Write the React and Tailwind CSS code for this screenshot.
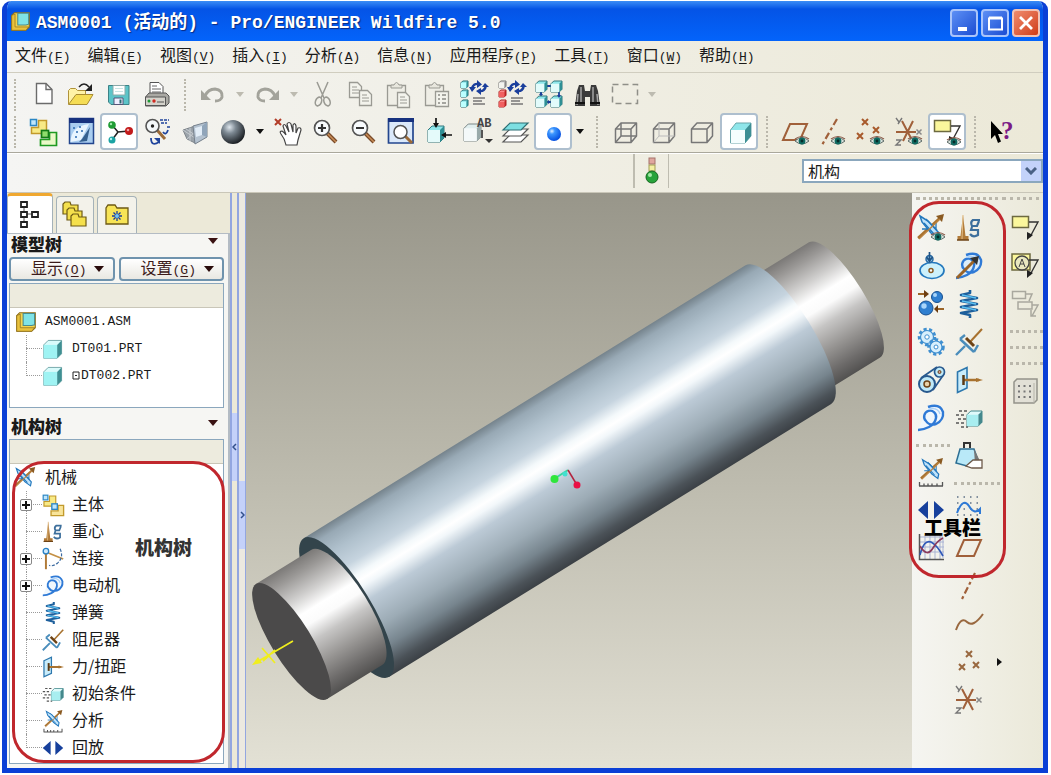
import React from "react";

/* ---------- drawing helpers ---------- */
function Svg({ size = 28, children }) {
  return (
    <svg width={size} height={size} viewBox="0 0 28 28" fill="none" className="shrink-0 overflow-visible" aria-hidden="true">
      {children}
    </svg>
  );
}

const Eye = ({ x = 20, y = 23 }) => (
  <g transform={`translate(${x} ${y})`}>
    <path d="M-7 0Q0-7 7 0Q0 6-7 0Z" fill="#d9e2dc" stroke="#5d6b68" strokeWidth="1" />
    <circle r="3.4" fill="#0f6b62" />
    <circle r="1.4" fill="#052c2a" />
    <path d="M-7-2Q0-7 7-2" stroke="#8a5a48" strokeWidth="1.2" />
  </g>
);

const Cross = ({ x, y, r = 3, c = "#a85a2c", w = 2 }) => (
  <path d={`M${x - r} ${y - r}L${x + r} ${y + r}M${x + r} ${y - r}L${x - r} ${y + r}`} stroke={c} strokeWidth={w} />
);

const Cube = ({ x = 0, y = 0, s = 8, front = "#e4fafa", side = "#2f8f94", top = "#8fe6ea", line = "#33767c" }) => (
  <g transform={`translate(${x} ${y}) scale(${s / 8})`} strokeLinejoin="round">
    <path d="M0 2L2 0H8V6L6 8H0Z" fill={top} stroke={line} strokeWidth={8 / s} />
    <path d="M6 2L8 0V6L6 8Z" fill={side} />
    <path d="M0 2H6V8H0Z" fill={front} />
  </g>
);

/* ---------- file and edit icons ---------- */
const New = () => <Svg><path d="M7.5 2.5H17l6 6v14H7.5z" fill="#fff" stroke="#6b6b6b" strokeWidth="1.4" /><path d="M17 2.5v6h6" stroke="#6b6b6b" strokeWidth="1.4" /></Svg>;
const Open = () => (
  <Svg>
    <path d="M1.5 23V9.500l2-2h5l2 2h8v4" fill="#fff3a6" stroke="#b0933a" />
    <path d="M1.500 23.500L9 13.500H26L20 23.500Z" fill="#f5dd55" stroke="#a88c32" />
    <path d="M12 6Q17 0 22 6" stroke="#222" strokeWidth="1.500" />
    <path d="M25 3v7h-7z" fill="#222" />
  </Svg>
);
const Save = () => (
  <Svg>
    <path d="M3.500 4.500H24V23.500H6L3.500 21Z" fill="#5cc4c8" stroke="#3b8286" />
    <path d="M8 4.500H20V14H8Z" fill="#fff" stroke="#8aa" />
    <path d="M9 17H18V23.500H9Z" fill="#eef" stroke="#557" />
    <path d="M14.500 18.500h2v4h-2z" fill="#2c6a70" />
    <path d="M10 7.500h8M10 10.500h8" stroke="#c9e4e4" />
  </Svg>
);
const Print = () => (
  <Svg>
    <path d="M7 13V1.500h9l4 4V13" fill="#fff" stroke="#555" />
    <path d="M9 5h5M9 8h9M9 11h9" stroke="#666" />
    <path d="M2.500 16L6 12H23l3 3v7l-3 3H2.500Z" fill="#aaa9a4" stroke="#555" />
    <path d="M2.500 16H22.500V24.500H2.500Z" fill="#d4d2cb" stroke="#555" />
    <circle cx="6" cy="20" r="1.500" fill="#1c9a34" /><circle cx="11" cy="20" r="1.700" fill="#d12a20" />
    <path d="M14 21h7" stroke="#555" />
  </Svg>
);
const Undo = () => <Svg><path d="M6 15Q9 8 16 8Q24 9 23 16Q22 20 16 20" stroke="#a3a39b" strokeWidth="3" /><path d="M2 9V19H12Z" fill="#a3a39b" /></Svg>;
const Redo = () => <Svg><g transform="translate(28 0) scale(-1 1)"><path d="M6 15Q9 8 16 8Q24 9 23 16Q22 20 16 20" stroke="#a3a39b" strokeWidth="3" /><path d="M2 9V19H12Z" fill="#a3a39b" /></g></Svg>;
const Cut = () => (
  <Svg>
    <path d="M10 1L17 17M21 1L14 17" stroke="#9a9a93" strokeWidth="1.500" />
    <ellipse cx="11.500" cy="20.500" rx="3" ry="4.500" transform="rotate(20 11.500 20.500)" stroke="#9a9a93" strokeWidth="1.600" />
    <ellipse cx="20" cy="20.500" rx="3" ry="4.500" transform="rotate(-20 20 20.500)" stroke="#9a9a93" strokeWidth="1.600" />
  </Svg>
);
const Page = ({ x, y }) => (
  <g transform={`translate(${x} ${y})`}><path d="M.5.5h8l4 4v11H.5z" fill="#f3f3ec" stroke="#9a9a93" strokeWidth="1.300" /><path d="M3 5h5M3 8h7M3 11h7" stroke="#9a9a93" /></g>
);
const Copy = () => <Svg><Page x={4} y={1} /><Page x={14} y={9} /></Svg>;
const Board = () => <><path d="M4.500 4.500H22.500V24.500H4.500Z" fill="#efeee6" stroke="#9a9a93" strokeWidth="1.300" /><path d="M8 7V4h3q2.500-5 5 0h3v3z" fill="#e8e7de" stroke="#9a9a93" /></>;
const Paste = () => <Svg><Board /><Page x={14} y={11} /></Svg>;
const PasteSpecial = () => <Svg><Board /><path d="M14.500 10.500h13v15h-13z" fill="#f3f3ec" stroke="#9a9a93" strokeWidth="1.300" /><path d="M17 14h2M17 18h2M17 22h2M21 14h4M21 18h4M21 22h4" stroke="#8c8c85" strokeWidth="1.500" /></Svg>;
const Regen = ({ red }) => (
  <Svg>
    <Cube x={2} y={0} s={7} front={red ? "#f3f3ee" : "#bff"} line={red ? "#777" : "#256b70"} side={red ? "#888" : "#2f8f94"} top={red ? "#ddd" : "#8fe6ea"} />
    <Cube x={2} y={9} s={7} front={red ? "#f06060" : "#bff"} line={red ? "#a22" : "#256b70"} side={red ? "#b22" : "#2f8f94"} top={red ? "#f99" : "#8fe6ea"} />
    <Cube x={2} y={19} s={7} front={red ? "#f06060" : "#bff"} line={red ? "#a22" : "#256b70"} side={red ? "#b22" : "#2f8f94"} top={red ? "#f99" : "#8fe6ea"} />
    <path d="M13 8Q14 2 20 3M27 4Q26 11 20 10" stroke="#1b3f9c" strokeWidth="2.400" />
    <path d="M18-1L23 3.500L18 7ZM22 7L17 10L22 14ZM10 6h7l-4 5zM23 6h7l-4-4z" fill="#1b3f9c" />
    <path d="M14 17h12M14 20h9M14 23h12" stroke="#777" strokeWidth="1.300" />
  </Svg>
);
const CubeGrid = () => (
  <Svg>
    <path d="M10 5h9M10 21h9M6 10v7M24 10v7" stroke="#1b3f9c" strokeWidth="1.800" />
    {[[1, 0], [16, 0], [1, 15], [16, 15]].map(([x, y]) => <Cube key={x + "-" + y} x={x} y={y} s={11} front="#e2fbfb" />)}
    <path d="M6 11l-2 3h4zM13 19v4l3-2zM24 17l-2-3h4z" fill="#1b3f9c" />
  </Svg>
);
const Find = () => (
  <Svg>
    <path d="M2 25L4 10L6 4H11L12 10H17L18 4H23L25 10L27 25H17V16H12V25Z" fill="#3b3b3b" />
    <path d="M5 13L4 24M8 6v17M20 6v17M24 13l1 11" stroke="#a5a5a5" strokeWidth="1.500" />
    <path d="M2 22h10M17 22h10" stroke="#111" strokeWidth="2" />
  </Svg>
);
const SelectBox = () => <Svg><rect x="1.500" y="3.500" width="25" height="19" stroke="#8f8f88" strokeWidth="1.500" strokeDasharray="6 4" /></Svg>;

/* ---------- view icons ---------- */
const Bodies = ({ size, green = true }) => (
  <Svg size={size}>
    <path d="M9.500 2.500H17.500V15.500H2.500V9.500H9.500Z" fill="#f8ea86" stroke="#c29a2c" strokeWidth="1.500" />
    <rect x="1.500" y="1.500" width="6" height="6" fill="#bfe6fb" stroke="#2b86c4" strokeWidth="1.500" />
    <path d="M20.500 14.500H27.500V27.500H11.500V21.500H20.500Z" fill={green ? "#eaf9c8" : "#f8e49a"} stroke={green ? "#1f9a22" : "#c29a2c"} strokeWidth="1.700" />
    <rect x="12.500" y="12.500" width="7" height="7" fill={green ? "#8fdc6c" : "#bfe6fb"} stroke={green ? "#147a18" : "#2b86c4"} strokeWidth="1.700" />
  </Svg>
);
const Sketcher = () => (
  <Svg>
    <path d="M2.500.500H26.500V25.500H2.500Z" fill="#a9cdf0" stroke="#23468e" strokeWidth="1.500" />
    <path d="M2 0H27V5H2Z" fill="#17327f" />
    <path d="M3.500 24Q4 8 22 6L14 22Z" fill="#e9f5ff" />
    <path d="M23 9L15 21L12 24L20 23Z" fill="#35608f" /><path d="M6 10h2M9 14h2M12 9h2M8 19h2M14 13h2" stroke="#2b6ab0" strokeWidth="1.500" />
  </Svg>
);
const Joints = () => (
  <Svg>
    <path d="M7 7L13 14L24 13M13 14L7 22" stroke="#222" strokeWidth="1.500" />
    <circle cx="7" cy="7" r="3.800" fill="#1f9c34" /><circle cx="24" cy="13" r="4" fill="#c21b1b" /><circle cx="7" cy="22" r="3.500" fill="#1aa3a3" />
    <circle cx="6" cy="6" r="1.200" fill="#9fe6a8" /><circle cx="23" cy="12" r="1.300" fill="#f3a0a0" /><circle cx="6" cy="21" r="1.200" fill="#b5f0f0" />
  </Svg>
);
const Query = () => (
  <Svg>
    <path d="M14 12L22 21" stroke="#9b6a38" strokeWidth="3" /><circle cx="9.500" cy="8" r="6.500" fill="#f4f8fa" stroke="#555" strokeWidth="1.600" /><circle cx="9.500" cy="8" r="1.700" fill="#222" />
    <path d="M17 2h9M18 5h6M24 9h3" stroke="#20449c" strokeWidth="1.500" strokeDasharray="3 1" />
    <path d="M25 12Q23 18 20 14M16 24Q8 29 8 20" stroke="#20449c" strokeWidth="1.800" /><path d="M11 20h6v6z" fill="#20449c" />
  </Svg>
);
const ViewBox = () => (
  <Svg>
    <path d="M2 12L14 8V25L6 21Z" fill="#9ba3aa" stroke="#7d848a" />
    <path d="M2 12L14 20M5 11L14 17M6 21L14 14M9 9.500V23" stroke="#c6cbd0" />
    <path d="M12 8L26 4V19L14 26Z" fill="#b4c2d0" stroke="#76818c" />
    <path d="M14 10L21 8V17L15 19Z" fill="#e2edf7" /><path d="M21 8L26 4V19L21 17Z" fill="#90a5ba" />
  </Svg>
);
const Sphere = () => (
  <Svg>
    <defs><radialGradient id="sphere" cx=".35" cy=".3" r=".75"><stop offset="0" stopColor="#dfe7ee" /><stop offset=".35" stopColor="#7d8993" /><stop offset="1" stopColor="#15191d" /></radialGradient></defs>
    <circle cx="14" cy="14" r="12" fill="url(#sphere)" />
  </Svg>
);
const Hand = () => (
  <Svg>
    <Cross x={5} y={4} r={3} c="#b23c28" />
    <path d="M13 27Q12 21 8 16Q6 13 9 13Q11 14 13 17L10 8Q11 5 13 8L16 14L14 6Q16 3 18 6L20 14L20 7Q22 4 23 8L23 15L25 10Q28 9 28 12L25 22L24 27Z" fill="#fff" stroke="#444" strokeWidth="1.200" />
  </Svg>
);
const Magnifier = ({ plus }) => (
  <Svg>
    <path d="M16 15L25 24" stroke="#7a4a28" strokeWidth="4" /><path d="M16 15L25 24" stroke="#c98e58" strokeWidth="1.500" />
    <circle cx="11" cy="10" r="7.500" fill="#f8fbfd" stroke="#555" strokeWidth="1.700" />
    <path d={plus ? "M7 10h8M11 6v8" : "M7 10h8"} stroke="#333" strokeWidth="2.200" />
  </Svg>
);
const Refit = () => (
  <Svg>
    <path d="M1.500 1H26V25H1.500Z" fill="#dbe9fa" stroke="#23468e" strokeWidth="1.700" /><path d="M1 0H27V4H1Z" fill="#17327f" />
    <path d="M18 18L25 25" stroke="#9b6a38" strokeWidth="3" /><circle cx="13.500" cy="14" r="6.500" fill="#fff" stroke="#555" strokeWidth="1.500" />
  </Svg>
);
const Reorient = () => (
  <Svg>
    <Cube x={3} y={8} s={16} /><path d="M11 0V7M27 17H20" stroke="#111" strokeWidth="1.700" /><path d="M8 5h6l-3 5zM21 14v6l-5-3z" fill="#111" />
  </Svg>
);
const SavedViews = () => (
  <Svg>
    <Cube x={1} y={6} s={17} front="#f4f9f9" side="#9aa" top="#e0eeee" line="#7c8888" />
    <text x="14" y="9" fontSize="12" fontFamily="Liberation Mono" fontWeight="700" fill="#444">AB</text>
    <path d="M19 12v8" stroke="#555" strokeWidth="2" /><path d="M22 21h8l-4 4z" fill="#333" />
  </Svg>
);
const Layers = () => (
  <Svg>
    <path d="M2 24L9 17H27L20 24Z" fill="#fff" stroke="#555" strokeWidth="1.200" /><path d="M2 18L9 11H27L20 18Z" fill="#fff" stroke="#555" strokeWidth="1.200" />
    <path d="M2 12L9 5H27L20 12Z" fill="#7ddfe2" stroke="#2d6f74" strokeWidth="1.200" />
  </Svg>
);
const BlueBall = () => (
  <Svg>
    <defs><radialGradient id="ball" cx=".35" cy=".3" r=".7"><stop offset="0" stopColor="#e3f1ff" /><stop offset=".3" stopColor="#3b96ff" /><stop offset="1" stopColor="#0550e0" /></radialGradient></defs>
    <circle cx="15" cy="16" r="7" fill="url(#ball)" />
  </Svg>
);
const Wire = ({ mode }) => (
  <Svg>
    <g stroke="#777" strokeWidth="1.500" strokeLinejoin="round">
      <path d="M4.500 11L10 5H25.500V18L20 24.500H4.500ZM4.500 11H20V24.500M20 11L25.500 5" />
      {mode < 2 && <path d="M10 5V18H25.500M10 18L4.500 24.500" stroke={mode ? "#bbb" : "#777"} strokeWidth={mode ? 1 : 1.500} />}
    </g>
  </Svg>
);
const Shaded = () => (
  <Svg>
    <path d="M5.500 12L11 5H26V18L20 25H5.500Z" fill="#8fe6ea" stroke="#6aa6aa" /><path d="M20 12L26 5V18L20 25Z" fill="#3d8f94" /><path d="M6 12H20V25H6Z" fill="#f5fefe" />
  </Svg>
);

/* ---------- datum icons ---------- */
const Plane = ({ eye }) => <Svg><path d="M2 22L9 6H26L19 22Z" stroke="#a0603a" strokeWidth="2" />{eye && <Eye x={21} />}</Svg>;
const Axis = ({ eye }) => <Svg><path d={eye ? "M18 1L3 27" : "M20 1L7 27"} stroke="#a0603a" strokeWidth="2.200" strokeDasharray="7 3 3 3" />{eye && <Eye x={19} />}</Svg>;
const PointsEye = () => <Svg><Cross x={8} y={4} /><Cross x={19} y={12} /><Cross x={3} y={18} /><Eye /></Svg>;
const Points = () => <Svg><Cross x={14} y={6} c="#99683f" /><Cross x={7} y={19} c="#99683f" /><Cross x={21} y={17} c="#99683f" /></Svg>;
const Csys = ({ eye }) => (
  <Svg>
    <path d="M1 14H21M7 3L18 24M18 3L8 23" stroke="#a0603a" strokeWidth="2" />
    <path d="M1 0L4 4M7 0L3 6M1 22h5l-5 5h5" stroke="#777" strokeWidth="1.400" />
    <Cross x={24} y={14} r={2.500} c="#888" w={1.500} />
    {eye && <Eye />}
  </Svg>
);
const Note = ({ eye, circle }) => (
  <Svg>
    <path d={circle ? "M1 2H19V18H1Z" : "M1.500 2.500H17.500V13.500H1.500Z"} fill="#fbf79c" stroke="#6d6a40" strokeWidth="1.500" />
    {circle && <><circle cx="11" cy="11" r="7" fill="#e9e8c0" stroke="#444" strokeWidth="1.300" /><path d="M8 15L11 7L14 15M9 12h4" stroke="#444" /></>}
    <path d="M18 8H27L19 23" stroke="#333" strokeWidth="1.400" />
    <path d="M16 26V18L22 21Z" fill="#222" />
    {eye && <Eye x={21} y={24} />}
  </Svg>
);
const NotesGray = () => <Svg><path d="M1.500 1.500H14.500V8.500H1.500ZM7 12H21V19H7ZM15 4H21L18 11M21 15H27L21 26M20 20v6h5" stroke="#a9a89e" strokeWidth="1.500" /></Svg>;
const GridGray = () => (
  <Svg>
    <path d="M3 6L6 3H26V24L23 27H3Z" fill="#e2e0d6" stroke="#94938a" strokeWidth="1.500" /><path d="M23 7V27" stroke="#b5b3a8" />
    <path d="M7 10h13M7 15.500h13M7 21h13" stroke="#777" strokeWidth="2" strokeDasharray="2 3.500" />
  </Svg>
);
const Help = () => <Svg><path d="M2 3V21L6 17L9 25L12 23.500L9 16H14Z" fill="#000" /><text x="12" y="21" fontSize="25" fontFamily="Liberation Serif" fontWeight="700" fill="#7b1a86">?</text></Svg>;

/* ---------- mechanism icons ---------- */
const Mech = ({ size, eye, scale }) => (
  <Svg size={size}>
    <g transform={scale ? "translate(3 0) scale(.85)" : undefined}>
      <path d="M1 24L24 3" stroke="#a8722f" strokeWidth="2.500" /><path d="M19 2L27 0L25 8Z" fill="#8a5a22" />
      <path d="M3 2L11 7L22 19L21 24L14 19L5 8Z" fill="#bfe3fb" stroke="#2378bd" strokeWidth="1.500" />
      <path d="M9 5L20 16M7 9L17 20M11 15L5 15M19 9V15" stroke="#2378bd" strokeWidth="1.300" />
      <path d="M2 25L23 5" stroke="#b98240" strokeWidth="1.400" />
    </g>
    {eye && <Eye x={21} y={23} />}
    {scale && <path d="M2 28H26M2.500 24V28M7 25.500V28M11 25.500V28M15 25.500V28M20 25.500V28M25.500 24V28" stroke="#555" strokeWidth="1.300" />}
  </Svg>
);
const Gravity = ({ size }) => (
  <Svg size={size}>
    <path d="M8 1L5.500 22H2.500V26H13.500V22H10.500Z" fill="#b07a38" /><path d="M8 1L7 25" stroke="#e3bd85" /><path d="M2 26h12" stroke="#6d4316" strokeWidth="1.500" />
    <path d="M25 6H18Q15 8 17 12H22L24 7M17 13L16 16H23V21Q18 24 15 20" stroke="#3d6f9c" strokeWidth="2.200" />
  </Svg>
);
const Connection = ({ size }) => (
  <Svg size={size}>
    <path d="M5 6V27" stroke="#b07a38" strokeWidth="2.500" /><path d="M5 5L27 14" stroke="#c49044" strokeWidth="2.200" /><circle cx="5" cy="4" r="3.500" fill="#cfeafc" stroke="#2780c6" strokeWidth="1.700" />
    <path d="M23 1Q28 12 20 19Q14 24 9 22" stroke="#3b6aa0" strokeWidth="1.500" strokeDasharray="4 2" />
  </Svg>
);
const Cam = () => (
  <Svg>
    <ellipse cx="15" cy="18.500" rx="12" ry="8" fill="#cdf1fb" stroke="#2378bd" strokeWidth="1.700" /><circle cx="14" cy="18.500" r="2" fill="#fff" stroke="#8a5a22" strokeWidth="1.500" />
    <circle cx="12.500" cy="7" r="3.500" fill="#9dd2f0" stroke="#2a6ba5" strokeWidth="1.500" /><path d="M12.500 0V8M9.500 5L12.500 9L15.500 5" stroke="#1f5284" strokeWidth="1.700" />
  </Svg>
);
const Motor = ({ size, arrow }) => (
  <Svg size={size}>
    <path d="M11 3Q23-1 26 8Q27 16 19 20Q12 22 9 17A6 6 0 1 1 19 14Q18 20 12 23Q6 26 1 26" stroke="#2f7ad6" strokeWidth="2.400" fill={arrow ? "#dcedfb" : "#f0f7fd"} />
    <path d="M12 5Q21 3 23 10" stroke="#a9d0f8" strokeWidth="1.300" />
    {arrow && <><path d="M2 26L20 8" stroke="#9b6428" strokeWidth="3" /><path d="M24 4L15 6L22 13Z" fill="#333" /></>}
  </Svg>
);
const Contact = () => (
  <Svg>
    <circle cx="20" cy="7" r="5.500" fill="#2f7fd0" stroke="#184f8e" /><circle cx="18" cy="5" r="2" fill="#a8d5fa" />
    <circle cx="9" cy="18" r="7" fill="#2f7fd0" stroke="#184f8e" /><circle cx="7" cy="16" r="2.700" fill="#a8d5fa" />
    <path d="M1 4H9M27 19H20" stroke="#9b6428" strokeWidth="2" /><path d="M7 0L12 4L7 8ZM21 15L17 19L21 23Z" fill="#6d3d10" />
  </Svg>
);
const Spring = ({ size }) => (
  <Svg size={size}>
    <path d="M15 0V3L6 5L22 8L6 11L22 14L6 17L22 20L6 23L15 25V28" stroke="#1d5f9c" strokeWidth="2.600" strokeLinejoin="round" />
    <path d="M7 5L21 8M7 11L21 14M7 17L21 20" stroke="#5cc1f2" strokeWidth="1.700" />
  </Svg>
);
const Gears = () => (
  <Svg>
    <circle cx="10" cy="9" r="7.500" stroke="#3f8fd0" strokeWidth="3.500" strokeDasharray="3 2.300" /><circle cx="10" cy="9" r="6.500" fill="#d8effc" stroke="#3f8fd0" strokeWidth="1.200" /><circle cx="10" cy="9" r="2.200" fill="#fff" stroke="#3f8fd0" />
    <circle cx="19" cy="19" r="7" stroke="#3f8fd0" strokeWidth="3.500" strokeDasharray="3 2.300" /><circle cx="19" cy="19" r="6" fill="#d8effc" stroke="#3f8fd0" strokeWidth="1.200" /><circle cx="19" cy="19" r="2" fill="#fff" stroke="#3f8fd0" />
  </Svg>
);
const Damper = ({ size }) => (
  <Svg size={size}>
    <path d="M1 27L10 18M5 11L19 24M5 11L10 7M19 24L23 17" stroke="#4a8dbb" strokeWidth="2.400" />
    <path d="M27 1L15 14" stroke="#a8722f" strokeWidth="2" /><path d="M11 10L19 18" stroke="#6d4316" strokeWidth="3" />
  </Svg>
);
const Belt = () => (
  <Svg>
    <path d="M4 12L20 1M16 24L27 8" stroke="#28598e" strokeWidth="1.700" /><circle cx="10" cy="18" r="8" fill="#bfe9f8" stroke="#28598e" strokeWidth="2" />
    <circle cx="10" cy="18" r="3" fill="#e9d2a8" stroke="#6d4316" strokeWidth="1.500" /><circle cx="22.500" cy="6" r="5" fill="#bfe9f8" stroke="#28598e" strokeWidth="1.700" /><circle cx="22.500" cy="6" r="1.500" fill="#c99" stroke="#6d4316" />
  </Svg>
);
const Force = ({ size }) => (
  <Svg size={size}>
    <path d="M2.500 6L12 1.500V22L2.500 26.500Z" fill="#c9ecfa" stroke="#2d78ae" strokeWidth="1.600" /><path d="M8 14H24" stroke="#a8722f" strokeWidth="2.500" /><path d="M21 12L28 14L21 16Z" fill="#a8722f" /><path d="M8.500 9V19" stroke="#5a3a14" strokeWidth="2.500" />
  </Svg>
);
const InitCond = ({ size }) => (
  <Svg size={size}>
    <path d="M4 7h9M1 11h10M3 15h8M1 19h10M6 23h7" stroke="#555" strokeWidth="1.500" strokeDasharray="3 2" />
    <Cube x={12} y={7} s={15} front="#a8eef0" side="#44888c" top="#dffafa" line="#44888c" />
  </Svg>
);
const Mass = () => (
  <Svg>
    <path d="M5 7H19L24 21L12 24L1 21Z" fill="#b9e9f8" stroke="#2d6f94" strokeWidth="1.500" /><path d="M9 6V1H15V6" stroke="#333" strokeWidth="2" /><path d="M19 7L26 21L20 23Z" fill="#777" />
    <path d="M11 24L18 18H27V26H17Z" fill="#fff" stroke="#6d5a4a" strokeWidth="1.300" />
  </Svg>
);
const Playback = ({ size }) => <Svg size={size}><path d="M11 5V23L1 14ZM17 5V23L27 14Z" fill="#17409c" /></Svg>;
const Curve = () => <Svg><path d="M2 1H27M2 7H27M2 13H27M2 19H27" stroke="#5d7086" strokeWidth="1.500" strokeDasharray="1.500 5" /><path d="M2 17Q8 1 14 10Q19 19 25 13V18" stroke="#2f7ad6" strokeWidth="2" /></Svg>;
const Graph = () => (
  <Svg>
    <path d="M3 3H26V24M8 1V25M13 1V25M18 1V25M23 1V25M2 8H27M2 13H27M2 18H27" stroke="#a9b3d4" /><path d="M2.500 0V25.500H27" stroke="#555" strokeWidth="1.500" />
    <path d="M3 21Q7 5 14 8Q20 11 26 22" stroke="#2f58b8" strokeWidth="1.700" /><path d="M3 12Q10 24 16 14Q20 7 26 4" stroke="#8b3a5c" strokeWidth="1.700" />
  </Svg>
);
const Spline = () => <Svg><path d="M1 20Q6 6 12 12Q18 18 28 4" stroke="#99683f" strokeWidth="2" /></Svg>;

const AsmIcon = ({ size = 20 }) => (
  <Svg size={size}>
    <path d="M1 5L5 1H27V22L22 27H1Z" fill="#f4d34c" stroke="#8b6c1c" strokeWidth="1.500" /><path d="M10 2H26V18L22 19H10Z" fill="#7fe3e6" stroke="#4a8c8e" strokeWidth="1.500" /><path d="M1 5V27H22L26 22H6V3Z" fill="#e9c23c" stroke="#8b6c1c" />
  </Svg>
);
const PartIcon = () => <Svg size={20}><Cube x={1} y={2} s={25} front="#9ff3f3" side="#3f8f92" top="#d9fbfb" line="#4c8c8e" /></Svg>;

/* ---------- controls ---------- */
const Grip = () => <span className="flex w-[18px] justify-center"><span className="h-8 border-l-2 border-dotted border-[#bab7ab]" /></span>;
const Arrow = ({ gray }) => (
  <span className="flex w-4 justify-center">
    <svg width="8" height="5" viewBox="0 0 8 5" aria-hidden="true"><path d="M0 0H8L4 5Z" fill={gray ? "#bdbbb0" : "#111"} /></svg>
  </span>
);
function Tool({ label, active, children }) {
  return (
    <button
      type="button"
      aria-label={label}
      title={label}
      className={
        active
          ? "flex h-[37px] w-[38px] shrink-0 items-center justify-center rounded-[4px] border-2 border-[#aebfce] bg-white"
          : "flex h-[37px] w-[38px] shrink-0 items-center justify-center"
      }
    >
      {children}
    </button>
  );
}
function Label({ text, k }) {
  return (
    <span className="whitespace-nowrap">
      {text}
      <span className="font-['Liberation_Mono',monospace] text-[13px]">(<u className="underline-offset-2">{k}</u>)</span>
    </span>
  );
}

const MENUS = [["文件", "F"], ["编辑", "E"], ["视图", "V"], ["插入", "I"], ["分析", "A"], ["信息", "N"], ["应用程序", "P"], ["工具", "T"], ["窗口", "W"], ["帮助", "H"]];

function TitleBar() {
  const box = "flex size-[28px] items-center justify-center rounded-[4px] border-2";
  return (
    <header className="flex h-10 items-center pr-[3px] pl-1">
      <AsmIcon size={19} />
      <h1 className="flex-1 truncate pt-1 pl-[6px] font-['Liberation_Mono','Noto_Sans_CJK_SC',monospace] text-[18px] font-bold whitespace-pre text-white [text-shadow:1px_1px_1px_#0a2a80]">
        ASM0001 (活动的) - Pro/ENGINEER Wildfire 5.0
      </h1>
      <div className="flex gap-[3px] pt-1">
        <button type="button" aria-label="最小化" className={`${box} border-[#a9c4fa] bg-linear-to-br from-[#5d8ff5] to-[#1c4bd2]`}>
          <svg width="20" height="20" aria-hidden="true"><path d="M4 14h9v4H4z" fill="#fff" /></svg>
        </button>
        <button type="button" aria-label="最大化" className={`${box} border-[#a9c4fa] bg-linear-to-br from-[#5d8ff5] to-[#1c4bd2]`}>
          <svg width="20" height="20" aria-hidden="true"><path d="M4 5.500h13v11H4zM4 4.500h13" stroke="#fff" strokeWidth="2" fill="none" /></svg>
        </button>
        <button type="button" aria-label="关闭" className={`${box} border-[#f2c3b5] bg-linear-to-br from-[#ef8a6c] to-[#cf3a12]`}>
          <svg width="20" height="20" aria-hidden="true"><path d="M4 4L16 16M16 4L4 16" stroke="#fff" strokeWidth="2.800" /></svg>
        </button>
      </div>
    </header>
  );
}

function Toolbars() {
  return (
    <div className="flex flex-col border-b border-[#aaa89c] bg-linear-to-r from-[#f4f4f2] to-[#ece9d8] pt-[3px] pb-[2px] pl-px">
      <div className="flex h-[37px] items-center">
        <span className="-ml-0.5 flex"><Grip /></span>
        <Tool label="新建"><New /></Tool><Tool label="打开"><Open /></Tool><Tool label="保存"><Save /></Tool><Tool label="打印"><Print /></Tool>
        <Grip />
        <Tool label="撤消"><Undo /></Tool><Arrow gray /><Tool label="重做"><Redo /></Tool><Arrow gray />
        <Tool label="剪切"><Cut /></Tool><Tool label="复制"><Copy /></Tool><Tool label="粘贴"><Paste /></Tool><Tool label="选择性粘贴"><PasteSpecial /></Tool>
        <Tool label="再生"><Regen /></Tool><Tool label="再生管理器"><Regen red /></Tool><Tool label="再生全部"><CubeGrid /></Tool><Tool label="查找"><Find /></Tool>
        <Tool label="选取框"><SelectBox /></Tool><Arrow gray />
      </div>
      <div className="flex h-[37px] items-center">
        <span className="-ml-0.5 flex"><Grip /></span>
        <Tool label="主体"><Bodies /></Tool><Tool label="草绘"><Sketcher /></Tool><Tool label="连接" active><Joints /></Tool><Tool label="查询"><Query /></Tool>
        <Tool label="视图"><ViewBox /></Tool><Tool label="外观"><Sphere /></Tool><Arrow />
        <Tool label="拖动"><Hand /></Tool><Tool label="放大"><Magnifier plus /></Tool><Tool label="缩小"><Magnifier /></Tool><Tool label="重新调整"><Refit /></Tool>
        <Tool label="重定向"><Reorient /></Tool><Tool label="已命名视图"><SavedViews /></Tool><Tool label="层"><Layers /></Tool><Tool label="渲染" active><BlueBall /></Tool><Arrow />
        <Grip />
        <Tool label="线框"><Wire mode={0} /></Tool><Tool label="隐藏线"><Wire mode={1} /></Tool><Tool label="无隐藏线"><Wire mode={2} /></Tool><Tool label="着色" active><Shaded /></Tool>
        <Grip />
        <Tool label="基准平面"><Plane eye /></Tool><Tool label="基准轴"><Axis eye /></Tool><Tool label="基准点"><PointsEye /></Tool><Tool label="坐标系"><Csys eye /></Tool><Tool label="注释" active><Note eye /></Tool>
        <Grip />
        <Tool label="帮助"><Help /></Tool>
      </div>
    </div>
  );
}

function StatusRow() {
  return (
    <div className="flex h-[39px] shrink-0 items-stretch border-t border-white bg-linear-to-r from-[#f5f5f3] to-[#ece9d8] pb-1">
      <div className="flex-1 border-r-2 border-[#bebcb0]" />
      <div className="flex w-[34px] items-center justify-center border-r border-[#bebcb0]">
        <svg width="16" height="28" viewBox="0 0 16 28" aria-hidden="true">
          <rect x="5" y="1" width="6" height="6" fill="#e0a79e" stroke="#a5736a" /><rect x="5" y="8" width="6" height="6" fill="#f3f0a2" stroke="#a29d55" />
          <circle cx="8" cy="20" r="6" fill="#27a33a" stroke="#14661f" /><circle cx="6" cy="18" r="2" fill="#a6e8a9" />
        </svg>
      </div>
      <div className="flex w-[374px] items-center justify-end">
        <div className="relative w-[241px]">
          <select aria-label="模式" defaultValue="机构" className="h-6 w-full appearance-none border-2 border-[#8ba7bd] bg-white pl-1 text-[16px] leading-4 outline-none">
            <option>机构</option>
          </select>
          <span className="pointer-events-none absolute top-0.5 right-0.5 flex h-5 w-5 items-center justify-center bg-[#c3d2fa]">
            <svg width="12" height="8" aria-hidden="true"><path d="M1 1L6 6L11 1" stroke="#4a6185" strokeWidth="3" fill="none" /></svg>
          </span>
        </div>
      </div>
    </div>
  );
}

function PanelTitle({ children }) {
  return (
    <div className="flex h-[23px] justify-between pr-1.5 pl-0.5">
      <h2 className="text-[17px] leading-5 font-black">{children}</h2>
      <svg width="10" height="6" className="mt-1" aria-hidden="true"><path d="M0 0H10L5 6Z" fill="#3a1212" /></svg>
    </div>
  );
}

function TreeItem({ icon, text, expand, mono, last }) {
  return (
    <li className="relative ml-4 flex h-[27px] items-center">
      <span className={last ? "absolute top-0 left-0 h-1/2 border-l border-dotted border-[#9a9a9a]" : "absolute top-0 left-0 h-full border-l border-dotted border-[#9a9a9a]"} />
      <span className="w-4 border-t border-dotted border-[#9a9a9a]" />
      {expand && (
        <button type="button" aria-label={`展开${text}`} className="absolute top-2 -left-[6px] flex size-3 items-center justify-center rounded-[2px] border border-[#888] bg-white">
          <svg width="8" height="8" aria-hidden="true"><path d="M0 4h8M4 0v8" stroke="#111" strokeWidth="2" /></svg>
        </button>
      )}
      <span className="flex w-[22px] justify-center">{icon}</span>
      <span className={mono ? "pl-2 font-['Liberation_Mono',monospace] text-[13px]" : "pb-[3px] pl-2 text-[16px] leading-6"}>{text}</span>
    </li>
  );
}

const MECH_TREE = [
  { text: "主体", icon: <Bodies size={22} green={false} />, expand: true },
  { text: "重心", icon: <Gravity size={22} /> },
  { text: "连接", icon: <Connection size={22} />, expand: true },
  { text: "电动机", icon: <Motor size={22} />, expand: true },
  { text: "弹簧", icon: <Spring size={22} /> },
  { text: "阻尼器", icon: <Damper size={22} /> },
  { text: "力/扭距", icon: <Force size={22} /> },
  { text: "初始条件", icon: <InitCond size={22} /> },
  { text: "分析", icon: <Mech size={22} scale /> },
  { text: "回放", icon: <Playback size={22} />, last: true },
];

function Navigator() {
  const tab = "flex items-center justify-center rounded-t-[4px] border border-b-0 border-[#a5b2b8]";
  const drop = "flex h-6 flex-1 items-center justify-center gap-2 rounded-[4px] border-2 border-[#6f93ad] bg-linear-to-b from-white to-[#e9e8e2] pl-3 text-[16px] leading-5 text-[#3c1a1a]";
  return (
    <aside className="flex w-[223px] shrink-0 flex-col">
      <div className="flex h-10 items-end gap-[3px]">
        <button type="button" aria-label="模型树" className={`${tab} h-10 w-[46px] border-t-[3px] border-t-[#f0a830] bg-white`}>
          <svg width="20" height="28" viewBox="0 0 20 28" aria-hidden="true"><path d="M4 7V10M4 17V20M7 13H12" stroke="#555" /><path d="M1 1h6v5H1zM1 11h6v5H1zM1 21h6v5H1zM12 11h6v5h-6z" fill="#fff" stroke="#222" strokeWidth="1.800" /></svg>
        </button>
        <button type="button" aria-label="文件夹浏览器" className={`${tab} h-[37px] w-[38px] bg-[#f3f2ea]`}>
          <svg width="26" height="28" viewBox="0 0 26 28" aria-hidden="true">
            {[[1, 1], [5, 7], [9, 13]].map(([x, y]) => <path key={x} d={`M${x} ${y + 12}V${y + 2}L${x + 2} ${y}H${x + 7}L${x + 8} ${y + 3}H${x + 15}V${y + 12}Z`} fill="#f5e04c" stroke="#6e5a14" strokeWidth="1.200" />)}
          </svg>
        </button>
        <button type="button" aria-label="收藏夹" className={`${tab} h-[37px] w-10 bg-[#f3f2ea]`}>
          <svg width="26" height="24" viewBox="0 0 26 24" aria-hidden="true"><path d="M2 21V5L4 2H11L13 5H24V21Z" fill="#f7e456" stroke="#6e5a14" strokeWidth="1.300" /><path d="M13 8V18M8 13H18M9.500 9.500L16.500 16.500M16.500 9.500L9.500 16.500" stroke="#16389c" strokeWidth="1.300" /><circle cx="13" cy="13" r="2" fill="#6fc2f5" /></svg>
        </button>
      </div>
      <div className="flex flex-1 flex-col border-t border-r-2 border-[#b4bcc4] bg-[#f6f6f3] pr-1 pb-1 pl-0.5">
        <PanelTitle>模型树</PanelTitle>
        <div className="flex gap-1 pb-0.5">
          <button type="button" className={drop}><Label text="显示" k="O" /><svg width="10" height="6" aria-hidden="true"><path d="M0 0H10L5 6Z" fill="#2a0c0c" /></svg></button>
          <button type="button" className={drop}><Label text="设置" k="G" /><svg width="10" height="6" aria-hidden="true"><path d="M0 0H10L5 6Z" fill="#2a0c0c" /></svg></button>
        </div>
        <div className="h-[125px] border border-[#8ba7bd] bg-white">
          <div className="h-6 border-b border-[#c9c6b8] bg-[#edebde]" />
          <div className="flex h-[27px] items-center pl-[6px]"><AsmIcon /><span className="pl-[9px] font-['Liberation_Mono',monospace] text-[13px]">ASM0001.ASM</span></div>
          <ul>
            <TreeItem icon={<PartIcon />} text="DT001.PRT" mono />
            <TreeItem
              icon={<PartIcon />}
              mono
              last
              text={<span className="flex items-center gap-px"><svg width="8" height="9" aria-hidden="true"><path d="M1 1h6v7H1zM3 4.500h2" fill="none" stroke="#222" /></svg>DT002.PRT</span>}
            />
          </ul>
        </div>
        <div className="flex flex-col pt-2"><PanelTitle>机构树</PanelTitle></div>
        <div className="relative flex-1 border border-[#8ba7bd] bg-white">
          <div className="h-6 border-b border-[#c9c6b8] bg-[#edebde]" />
          <div className="flex h-[27px] items-center pl-1"><Mech size={22} /><span className="pb-[3px] pl-[9px] text-[16px] leading-6">机械</span></div>
          <ul>{MECH_TREE.map((t) => <TreeItem key={t.text} {...t} />)}</ul>
          <span className="absolute top-[95px] left-[125px] text-[19px] leading-6 font-black text-[#333]">机构树</span>
          <div className="pointer-events-none absolute top-[21px] -right-0.5 bottom-0 left-0.5 rounded-[32px] border-[3px] border-[#c0272d]" />
        </div>
      </div>
    </aside>
  );
}

function Sashes() {
  const tab = "flex h-[68px] items-center justify-center bg-[#c4d1fa]";
  return (
    <>
      <div className="flex w-[9px] shrink-0 flex-col border-x-2 border-[#93a6e0]">
        <div className="flex flex-1 flex-col justify-end"><button type="button" aria-label="折叠导航器" className={tab}><svg width="5" height="8" aria-hidden="true"><path d="M4 1L1 4L4 7" stroke="#33508c" strokeWidth="1.500" fill="none" /></svg></button></div>
        <div className="flex-1" />
      </div>
      <div className="flex w-[7px] shrink-0 flex-col border-r border-[#93a6e0] bg-[#ece9e0]">
        <div className="flex-1" />
        <div className="flex flex-1 flex-col"><button type="button" aria-label="展开浏览器" className={tab}><svg width="5" height="8" aria-hidden="true"><path d="M1 1L4 4L1 7" stroke="#33508c" strokeWidth="1.500" fill="none" /></svg></button></div>
      </div>
    </>
  );
}

function Viewport() {
  return (
    <main className="relative min-w-0 flex-1 overflow-hidden bg-linear-to-b from-[#98968a] via-[#bdbbae] via-50% to-[#e3e1d5]">
      <svg className="absolute inset-0 h-full w-full" viewBox="246 193 666 575" preserveAspectRatio="xMidYMid meet" role="img" aria-label="装配模型">
        <defs>
          <linearGradient id="sleeve" x1="0" x2="0" y1="-81.500" y2="81.500" gradientUnits="userSpaceOnUse">
            <stop offset="0" stopColor="#75838c" /><stop offset=".06" stopColor="#98a9b5" /><stop offset=".16" stopColor="#afc0cc" /><stop offset=".28" stopColor="#c6d4df" />
            <stop offset=".36" stopColor="#f4f9fb" /><stop offset=".4" stopColor="#fff" /><stop offset=".44" stopColor="#f2f7fa" /><stop offset=".53" stopColor="#bccad6" />
            <stop offset=".7" stopColor="#9cabb5" /><stop offset=".83" stopColor="#77858e" /><stop offset=".94" stopColor="#4b5258" /><stop offset="1" stopColor="#3b4045" />
          </linearGradient>
          <linearGradient id="rod" x1="0" x2="0" y1="-67.700" y2="67.700" gradientUnits="userSpaceOnUse">
            <stop offset="0" stopColor="#7b7977" /><stop offset=".1" stopColor="#9b9997" /><stop offset=".25" stopColor="#d0cfce" /><stop offset=".37" stopColor="#fff" />
            <stop offset=".46" stopColor="#fbfbfb" /><stop offset=".58" stopColor="#c6c5c4" /><stop offset=".75" stopColor="#969492" /><stop offset=".9" stopColor="#6c6a69" /><stop offset="1" stopColor="#525150" />
          </linearGradient>
        </defs>
        <g transform="translate(291.500 641.500) rotate(-31.700)">
          <path d="M560-67.700H650A19.900 67.700 0 0 1 650 67.700H560Z" fill="url(#rod)" />
          <path d="M64.700-81.500H584A24 81.500 0 0 1 584 81.500H64.700Z" fill="url(#sleeve)" />
          <ellipse cx="64.700" rx="24" ry="81.500" fill="#33444b" />
          <path d="M0-67.700H64.700A21.500 67.700 0 0 1 64.700 67.700H0Z" fill="url(#rod)" />
          <ellipse rx="19.900" ry="67.700" fill="#4b4a4a" />
        </g>
        <path d="M554 479L568 470" stroke="#3ed6a0" strokeWidth="2" /><path d="M568 470L577 485" stroke="#b3243f" strokeWidth="1.500" />
        <circle cx="554.500" cy="479" r="4" fill="#2fe63c" /><circle cx="565" cy="474" r="2.500" fill="#42e0d0" /><circle cx="577" cy="485" r="3.500" fill="#ea0f45" />
        <path d="M293 641L257 662M262 648L275 663M275 650L263 661" stroke="#f0ee1e" strokeWidth="1.700" fill="none" /><path d="M252 665L258 657L262 663Z" fill="#f0ee1e" />
      </svg>
    </main>
  );
}

const DotRow = () => <div className="flex h-4 items-center pl-1"><span className="w-full border-t-[3px] border-dotted border-[#bab7ab]" /></div>;

function SideTools() {
  return (
    <nav aria-label="机构工具" className="relative flex w-[131px] shrink-0 flex-col bg-linear-to-r from-[#f5f5f1] to-[#ebe9d9]">
      <div className="flex h-4 items-center gap-1 pr-1 pb-[5px] pl-1"><span className="w-[90px] border-t-[3px] border-dotted border-[#bab7ab]" /><span className="flex-1 border-t-[3px] border-dotted border-[#bab7ab]" /></div>
      <div className="flex [&_button]:h-[38px]">
        <div className="flex w-[38px] flex-col">
          <Tool label="机构显示"><Mech eye /></Tool><Tool label="凸轮"><Cam /></Tool><Tool label="3D 接触"><Contact /></Tool><Tool label="齿轮"><Gears /></Tool><Tool label="带"><Belt /></Tool><Tool label="伺服电动机"><Motor /></Tool>
          <DotRow />
          <Tool label="机构分析"><Mech scale /></Tool><Tool label="回放"><Playback /></Tool><Tool label="测量"><Graph /></Tool>
        </div>
        <div className="flex w-[56px] flex-col">
          <Tool label="重力"><Gravity /></Tool><Tool label="执行电动机"><Motor arrow /></Tool><Tool label="弹簧"><Spring /></Tool><Tool label="阻尼器"><Damper /></Tool><Tool label="力/扭矩"><Force /></Tool><Tool label="初始条件"><InitCond /></Tool><Tool label="质量属性"><Mass /></Tool>
          <DotRow />
          <Tool label="轨迹曲线"><Curve /></Tool><Tool label="平面"><Plane /></Tool><Tool label="轴"><Axis /></Tool><Tool label="曲线"><Spline /></Tool>
          <div className="flex items-center justify-between pr-1"><Tool label="点"><Points /></Tool><svg width="5" height="8" aria-hidden="true"><path d="M0 0V8L5 4Z" fill="#111" /></svg></div>
          <Tool label="坐标系"><Csys /></Tool>
        </div>
        <div className="flex w-[37px] flex-col">
          <Tool label="注释"><Note /></Tool><Tool label="注释特征"><Note circle /></Tool><Tool label="传播"><NotesGray /></Tool>
          <DotRow /><DotRow /><DotRow />
          <Tool label="网格"><GridGray /></Tool>
        </div>
      </div>
      <span className="absolute top-[322px] left-3 text-[19px] leading-6 font-black whitespace-nowrap text-black">工具栏</span>
      <div className="pointer-events-none absolute top-2 -left-[3px] h-[377px] w-[97px] rounded-[30px] border-[3px] border-[#c0272d]" />
    </nav>
  );
}

export default function App() {
  return (
    <div className="flex min-h-screen flex-col bg-white pt-px pr-[3px] pb-[2px] pl-[2px] font-['Noto_Sans_CJK_SC',sans-serif] text-[#1a1a1a]">
      <div className="flex flex-1 flex-col overflow-hidden rounded-t-[9px] border-x-[5px] border-b-[5px] border-[#0a3fd6] bg-[#ece9d8]">
        <div className="-mx-[5px] bg-linear-to-b from-[#3b8cf5] via-[#0554e6] via-20% to-[#0364fb] px-[5px]"><TitleBar /></div>
        <ul className="flex h-8 shrink-0 gap-[17px] border-b border-[#d0cdbf] bg-linear-to-r from-[#f4f4f2] to-[#ece9d8] pl-2 text-[16px] leading-[26px]">
          {MENUS.map(([t, k]) => <li key={t}><button type="button"><Label text={t} k={k} /></button></li>)}
        </ul>
        <Toolbars />
        <StatusRow />
        <div className="flex flex-1 border-t border-[#c9c6b8]">
          <Navigator />
          <Sashes />
          <Viewport />
          <SideTools />
        </div>
      </div>
    </div>
  );
}
